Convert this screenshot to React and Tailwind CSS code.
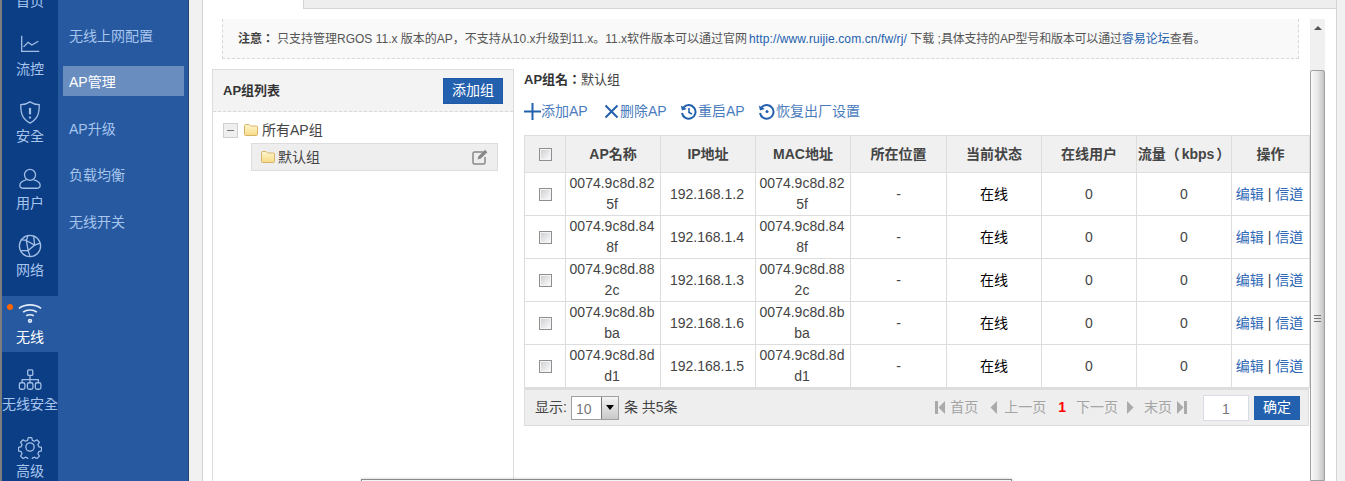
import React from 'react';

const navIcons = {
  chart: (
    <g>
      <path d="M4 3v17h19" />
      <path d="M6 15l5-5 4 3 7-4" />
    </g>
  ),
  shield: (
    <g>
      <path d="M13 2c3 2 6 3 10 3 0 9-1 15-10 20C4 20 3 14 3 5c4 0 7-1 10-3z" />
      <path d="M13 8.500v7" strokeWidth="2.400" />
      <path d="M13 18v2" strokeWidth="2.400" />
    </g>
  ),
  user: (
    <g>
      <circle cx="13" cy="8.500" r="6" />
      <path d="M9 14c-4 1-7 3-7 6 0 2 2 3 4 3h14c2 0 4-1 4-3 0-3-3-5-7-6" />
    </g>
  ),
  globe: (
    <g>
      <circle cx="13" cy="13" r="11.500" />
      <path d="M9 7l9 5-7 6z" />
      <path d="M9 7L3 6M18 12l6-2M11 18l2 6M9 7l2-6M11 18l-8 0M18 12l-1-10" />
    </g>
  ),
  wifi: (
    <g>
      <path d="M1 8c7-5 17-5 24 0" strokeWidth="1.800" />
      <path d="M5.500 12c4-3 11-3 15 0" strokeWidth="1.800" />
      <path d="M9 16c2-1.500 6-1.500 8 0" strokeWidth="1.800" />
      <circle cx="13" cy="21.500" r="1.500" strokeWidth="1.800" />
    </g>
  ),
  network: (
    <g>
      <rect x="10.500" y="2" width="5.500" height="6" rx="1" />
      <rect x="1.500" y="16" width="6" height="7" rx="2" />
      <rect x="10.200" y="16" width="6" height="7" rx="2" />
      <rect x="18.800" y="16" width="6" height="7" rx="2" />
      <path d="M13 8v8M4.500 16v-3.500h17.500V16" />
    </g>
  ),
  gear: (
    <g>
      <path d="M11 2.500h4l.7 3 2.400 1 2.700-1.600 2.800 2.800-1.600 2.700 1 2.400 3 .7v4l-3 .7-1 2.400 1.600 2.700-2.800 2.800-2.700-1.600-2.400 1-.7 3h-4l-.7-3-2.400-1-2.700 1.600-2.800-2.800 1.600-2.700-1-2.400-3-.7v-4l3-.7 1-2.400-1.600-2.700 2.800-2.800 2.700 1.600 2.400-1z" transform="translate(.500 .500) scale(.96)" strokeLinejoin="round" />
      <circle cx="13" cy="13" r="4.500" />
    </g>
  ),
};

const navItems = [
  { label: '流控', icon: 'chart' },
  { label: '安全', icon: 'shield' },
  { label: '用户', icon: 'user' },
  { label: '网络', icon: 'globe' },
  { label: '无线', icon: 'wifi', active: true },
  { label: '无线安全', icon: 'network' },
  { label: '高级', icon: 'gear' },
];

const subItems = ['无线上网配置', 'AP管理', 'AP升级', '负载均衡', '无线开关'];

const rows = [
  { mac: '0074.9c8d.825f', ip: '192.168.1.2' },
  { mac: '0074.9c8d.848f', ip: '192.168.1.4' },
  { mac: '0074.9c8d.882c', ip: '192.168.1.3' },
  { mac: '0074.9c8d.8bba', ip: '192.168.1.6' },
  { mac: '0074.9c8d.8dd1', ip: '192.168.1.5' },
];

const headers = ['AP名称', 'IP地址', 'MAC地址', '所在位置', '当前状态', '在线用户', '流量（ kbps ）', '操作'];
const colWidths = ['w-[41px]', 'w-[95px]', 'w-[95px]', 'w-[95px]', 'w-[96px]', 'w-[95px]', 'w-[95px]', 'w-[95px]', 'w-[78px]'];

const Folder = () => (
  <svg width="14" height="12" viewBox="0 0 14 12" className="shrink-0">
    <defs>
      <linearGradient id="folderFill" x1="0" y1="0" x2="0" y2="1">
        <stop offset="0" stopColor="#fff6cf" />
        <stop offset="1" stopColor="#f6da85" />
      </linearGradient>
    </defs>
    <path d="M.5 1.500A1 1 0 0 1 1.500.5h3.500l1.500 1.500h6a1 1 0 0 1 1 1v7.500a1 1 0 0 1-1 1h-11a1 1 0 0 1-1-1z" fill="url(#folderFill)" stroke="#d8b468" />
  </svg>
);

const Check = () => (
  <input
    type="checkbox"
    className="block mx-auto appearance-none w-[13px] h-[13px] border border-[#8e8f8f] bg-gradient-to-br from-[#cbccd0] to-[#ffffff] shadow-[inset_0_0_0_1px_#f4f4f4]"
  />
);

const ToolIcon = ({ children }) => (
  <svg width="17" height="17" viewBox="0 0 17 17" fill="none" stroke="#2360ae" strokeWidth="2" className="shrink-0">
    {children}
  </svg>
);

const Restore = ({ clock }) => (
  <ToolIcon>
    <path d="M3.500 4.500A6.800 6.800 0 1 1 2 10" />
    <path d="M.8 2.500l1.200 5 4.800-1.500z" fill="#2360ae" stroke="none" />
    {clock ? <path d="M9 5v4.500l3 1.500" strokeWidth="1.600" /> : <circle cx="9" cy="8.500" r="1.500" fill="#2360ae" stroke="none" />}
  </ToolIcon>
);

const Tri = ({ dir, bar }) => (
  <svg width="10" height="13" viewBox="0 0 10 13" fill="#aaaaaa" className="shrink-0">
    {dir === 'left' ? (
      <>
        {bar && <rect x="0" y="0" width="3" height="13" />}
        <path d="M10 0v13L3.500 6.500z" />
      </>
    ) : (
      <>
        {bar && <rect x="7" y="0" width="3" height="13" />}
        <path d="M0 0v13l6.500-6.500z" />
      </>
    )}
  </svg>
);

const App = () => {
  return (
    <div className="relative flex w-[1345px] h-[481px] overflow-hidden bg-[#f1f1f1] text-[14px] text-[#444] font-['Liberation_Sans','Noto_Sans_CJK_KR',sans-serif]">
      <div className="w-[2px] bg-[#7d7d7d]" />

      {/* main nav */}
      <div className="w-[56px] bg-[#0c3e85] text-[#a8c5ee]">
        <div className="-mt-[39px] flex flex-col gap-[11px]">
          <div className="h-[56px] flex flex-col justify-end items-center leading-[32px]">首页</div>
          {navItems.map((item) => (
            <div
              key={item.label}
              className={`relative h-[56px] flex flex-col items-center ${item.active ? 'bg-[#26599f] text-white' : ''}`}
            >
              {item.active && <span className="absolute left-[5px] top-[8px] w-[6px] h-[6px] rounded-full bg-[#ff6600]" />}
              <div className="h-[34px] flex items-center justify-center">
                <svg width="24" height="24" viewBox="0 0 26 26" fill="none" stroke={item.active ? '#e4edf9' : '#a3bfe6'} strokeWidth="1.400">
                  {navIcons[item.icon]}
                </svg>
              </div>
              <div className="leading-[14px] whitespace-nowrap">{item.label}</div>
            </div>
          ))}
        </div>
      </div>

      {/* sub nav */}
      <div className="w-[131px] bg-[#26599f] border-r border-[#26446e] text-[#a8c5ee] pt-[20px] pl-[5px] flex flex-col gap-[16.400px]">
        {subItems.map((name) => (
          <div
            key={name}
            className={`w-[121px] h-[30px] leading-[32px] pl-[6px] ${name === 'AP管理' ? 'bg-[#6a8dbf] text-white' : ''}`}
          >
            {name}
          </div>
        ))}
      </div>

      <div className="w-[13px]" />

      {/* content frame */}
      <div className="w-[1135px] h-full bg-white border-x border-[#d5d5d5] flex flex-col">
        <div className="h-[9px] flex shrink-0">
          <div className="w-[100px]" />
          <div className="flex-1 bg-[#eeeeee] border-l border-b border-[#d5d5d5]" />
        </div>

        <div className="flex flex-1 min-h-0">
          <div className="w-[1107px] flex flex-col">
            <div className="ml-[19px] mt-[10px] w-[1077px] h-[40px] bg-[#f9f9f9] border-x border-b border-dashed border-[#d8d8d8] flex items-center pl-[15px] text-[12px] text-[#555] whitespace-nowrap">
              <p>
                <b className="font-bold text-[#444] mr-[3px]">注意：</b>
                只支持管理RGOS 11.x 版本的AP，不支持从10.x升级到11.x。11.x软件版本可以通过官网
                <span className="ml-[2px] text-[#2360ae] tracking-[0.1px]">http://www.ruijie.com.cn/fw/rj/</span>
                {' 下载 ;'}
                <span className="tracking-[-0.2px]">具体支持的AP型号和版本可以通过</span>
                <span className="text-[#2360ae]">睿易论坛</span>
                查看。
              </p>
            </div>

            <div className="flex flex-1 min-h-0 mt-[10px] ml-[9px]">
              {/* group tree */}
              <div className="w-[302px] border-x border-t border-[#dddddd]">
                <div className="h-[42px] bg-[#f3f3f3] border-b border-dashed border-[#d8d8d8] flex items-center justify-between pl-[10px] pr-[10px]">
                  <b className="text-[13px] font-bold text-[#333]">AP组列表</b>
                  <button className="w-[60px] h-[26px] bg-[#2360ae] border border-[#1f5aa8] text-white text-[14px]">添加组</button>
                </div>
                <div className="pl-[10px] pt-[7px]">
                  <div className="flex items-center h-[22px]">
                    <span className="w-[15px] h-[15px] border border-[#d0d0d0] bg-[#efefef] flex items-center justify-center">
                      <span className="w-[7px] h-[1px] bg-[#777]" />
                    </span>
                    <span className="ml-[6px]"><Folder /></span>
                    <span className="ml-[4px] text-[14px]">所有AP组</span>
                  </div>
                  <div className="ml-[28px] mt-[2px] w-[247px] h-[28px] bg-[#eeeeee] border border-[#dddddd] flex items-center pl-[9px] pr-[9px]">
                    <Folder />
                    <span className="ml-[3px]">默认组</span>
                    <svg width="16" height="16" viewBox="0 0 16 16" fill="none" stroke="#888888" strokeWidth="1.500" className="ml-auto">
                      <path d="M11 3H2.500a1.500 1.500 0 0 0-1.500 1.500v9A1.500 1.500 0 0 0 2.500 15h9a1.500 1.500 0 0 0 1.500-1.500V8" />
                      <path d="M5.500 10.500l1-3.200L13 .8l2.400 2.400-6.500 6.400z" fill="#888888" stroke="none" />
                    </svg>
                  </div>
                </div>
              </div>

              {/* AP table */}
              <div className="ml-[10px] w-[785px]">
                <div className="h-[22px] leading-[22px] text-[13px]">
                  <b className="font-bold text-[#333]">AP组名：</b>默认组
                </div>
                <div className="h-[22px] mt-[9px] flex items-center text-[#4a7cbd] text-[14px]">
                  <div className="flex items-center w-[80px]">
                    <ToolIcon><path d="M8.500 0v17M0 8.500h17" /></ToolIcon>
                    <span>添加AP</span>
                  </div>
                  <div className="flex items-center w-[76px]">
                    <svg width="15" height="15" viewBox="0 0 15 15" fill="none" stroke="#2360ae" strokeWidth="2"><path d="M1.500 1.500l12 12M13.500 1.500l-12 12" /></svg>
                    <span className="ml-[1px]">删除AP</span>
                  </div>
                  <div className="flex items-center w-[78px]">
                    <Restore clock />
                    <span className="ml-[1px]">重启AP</span>
                  </div>
                  <div className="flex items-center">
                    <Restore />
                    <span className="ml-[1px]">恢复出厂设置</span>
                  </div>
                </div>

                <table className="mt-[13px] w-[785px] table-fixed border-collapse text-center text-[14px] leading-[21px]">
                  <colgroup>
                    {colWidths.map((w, i) => <col key={i} className={w} />)}
                  </colgroup>
                  <thead>
                    <tr className="h-[37px] bg-[#f0f0f0]">
                      <th className="border border-[#dddddd] p-0"><Check /></th>
                      {headers.map((h) => (
                        <th key={h} className="border border-[#dddddd] p-0 font-bold whitespace-nowrap text-[#444] [word-spacing:-2px]">{h}</th>
                      ))}
                    </tr>
                  </thead>
                  <tbody>
                    {rows.map((row) => (
                      <tr key={row.mac} className="h-[43px]">
                        <td className="border border-[#dddddd] p-0"><Check /></td>
                        <td className="border border-[#dddddd] pl-[3px] pr-[5px] py-0 break-all">{row.mac}</td>
                        <td className="border border-[#dddddd] pl-[3px] pr-[5px] py-0">{row.ip}</td>
                        <td className="border border-[#dddddd] pl-[3px] pr-[5px] py-0 break-all">{row.mac}</td>
                        <td className="border border-[#dddddd] p-0">-</td>
                        <td className="border border-[#dddddd] p-0 text-black">在线</td>
                        <td className="border border-[#dddddd] p-0">0</td>
                        <td className="border border-[#dddddd] p-0">0</td>
                        <td className="border border-[#dddddd] p-0 pr-[2px] whitespace-nowrap">
                          <span className="text-[#2f69b5]">编辑</span> | <span className="text-[#2f69b5]">信道</span>
                        </td>
                      </tr>
                    ))}
                  </tbody>
                </table>

                <div className="h-[38px] bg-[#eeeeee] border-x border-b border-t-2 border-[#dddddd] flex items-center pl-[10px] pr-[8px]">
                  <span>显示:</span>
                  <div className="ml-[4px] w-[48px] h-[24px] bg-white border border-[#a0a0a0] flex justify-between text-[#777]">
                    <span className="pl-[4px] leading-[25px]">10</span>
                    <span className="w-[17px] h-full bg-gradient-to-b from-[#f4f4f4] to-[#c9c9c9] border-l border-[#777] flex items-center justify-center">
                      <span className="border-x-[4px] border-x-transparent border-t-[5px] border-t-black" />
                    </span>
                  </div>
                  <span className="ml-[5px]">条 共5条</span>

                  <div className="ml-auto flex items-center text-[#a5a5a5]">
                    <Tri dir="left" bar />
                    <span className="ml-[5px]">首页</span>
                    <span className="ml-[9px]"><Tri dir="left" /></span>
                    <span className="ml-[7px]">上一页</span>
                    <b className="ml-[12px] font-bold text-[#ff0000]">1</b>
                    <span className="ml-[10px]">下一页</span>
                    <span className="ml-[9px]"><Tri dir="right" /></span>
                    <span className="ml-[7px]">末页</span>
                    <span className="ml-[5px]"><Tri dir="right" bar /></span>
                    <div className="ml-[16px] w-[46px] h-[26px] bg-white border border-[#d8dde5] text-[#777] text-center leading-[26px]">1</div>
                    <button className="ml-[5px] w-[46px] h-[24px] bg-[#2360ae] text-white">确定</button>
                  </div>
                </div>
              </div>
            </div>
          </div>

          {/* scrollbar */}
          <div className="mt-[10px] w-[15px] bg-[#f0f0f0] flex flex-col items-center">
            <div className="h-[51px] pt-[7px]">
              <div className="border-x-[4px] border-x-transparent border-b-[4px] border-b-[#555]" />
            </div>
            <div className="flex-1 w-full rounded-t-[2px] border border-[#a0a0a0] bg-gradient-to-r from-[#fafafa] via-[#e8e8e8] to-[#c4c4c4] flex items-center justify-center">
              <div className="w-[7px] h-[7px] mt-[86px] border-y border-[#777] flex items-center">
                <div className="w-full h-[1px] bg-[#777]" />
              </div>
            </div>
          </div>
        </div>
      </div>

      {/* edge of a dialog sitting over the page */}
      <div className="absolute left-[361px] top-[479px] w-[651px] h-[4px] bg-[#f4f4f4] border-t border-x border-[#8a8a8a] shadow-[0_0_3px_rgba(0,0,0,0.25)]" />
    </div>
  );
};

export default App;
